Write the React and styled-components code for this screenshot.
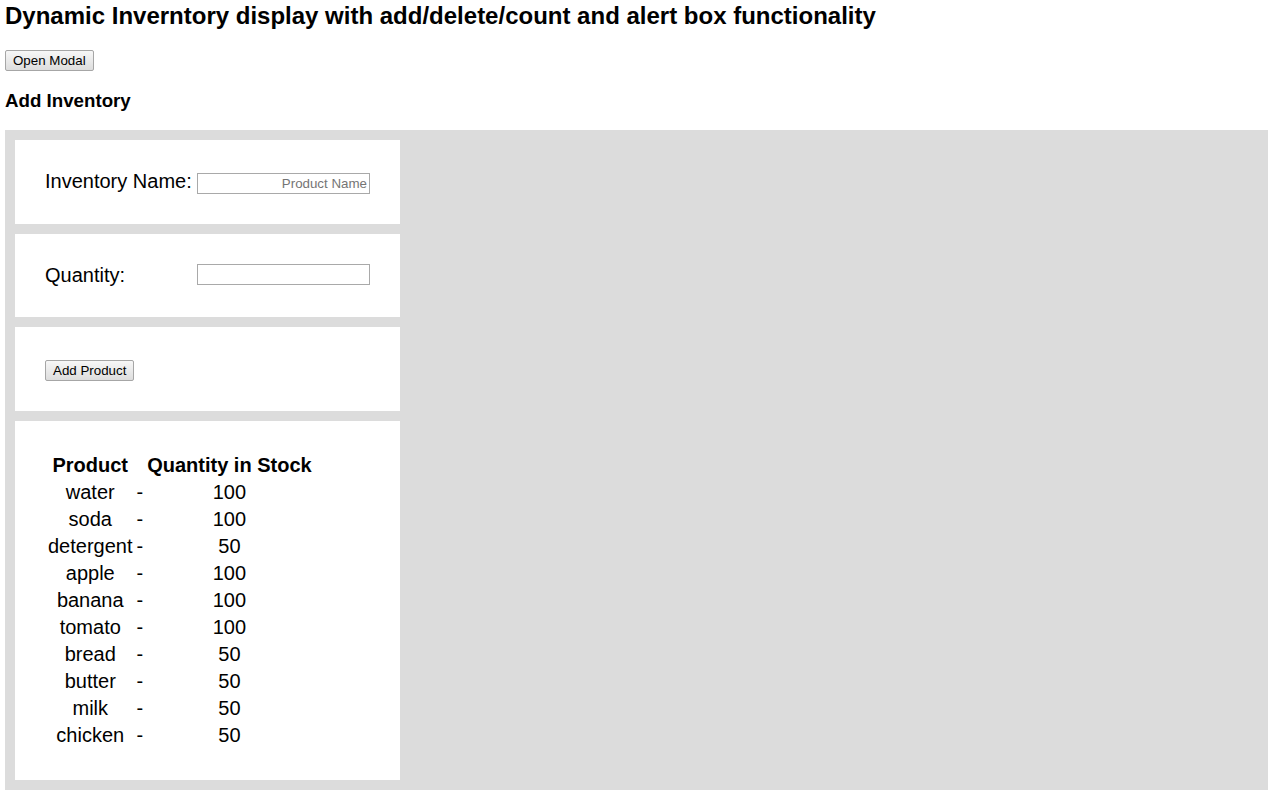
import styled, { createGlobalStyle } from "styled-components";

const GlobalStyle = createGlobalStyle`
	body {
		margin: 0;
		background: #ffffff;
		font-family: "Liberation Sans", Arial, sans-serif;
		color: #000000;
	}
`;

const inventory = [
	{ name: "water", qty: 100 },
	{ name: "soda", qty: 100 },
	{ name: "detergent", qty: 50 },
	{ name: "apple", qty: 100 },
	{ name: "banana", qty: 100 },
	{ name: "tomato", qty: 100 },
	{ name: "bread", qty: 50 },
	{ name: "butter", qty: 50 },
	{ name: "milk", qty: 50 },
	{ name: "chicken", qty: 50 },
];

const App = () => {
	return (
		<Page>
			<GlobalStyle />
			<Title>Dynamic Inverntory display with add/delete/count and alert box functionality</Title>
			<Btn>Open Modal</Btn>
			<SubTitle>Add Inventory</SubTitle>
			<Panel>
				<Card>
					<Label>Inventory Name:</Label>
					<Field placeholder="Product Name" />
				</Card>
				<Card>
					<Label>Quantity:</Label>
					<Field $valign="top" />
				</Card>
				<Card>
					<Btn>Add Product</Btn>
				</Card>
				<Card>
					<Table>
						<thead>
							<tr>
								<th>Product</th>
								<th></th>
								<th>Quantity in Stock</th>
							</tr>
						</thead>
						<tbody>
							{inventory.map((item) => (
								<tr key={item.name}>
									<td>{item.name}</td>
									<td>-</td>
									<td>{item.qty}</td>
								</tr>
							))}
						</tbody>
					</Table>
				</Card>
			</Panel>
		</Page>
	);
};

export default App;

const Page = styled.div`
	padding: 2px 5px 6px;
`;
const Title = styled.h2`
	margin: 0;
	font-size: 24px;
	line-height: 28px;
	font-weight: bold;
`;
const Btn = styled.button`
	display: inline-block;
	padding: 1px 7px;
	height: 21px;
	font-family: "Liberation Sans", Arial, sans-serif;
	font-size: 13.33px;
	color: #000;
	background: linear-gradient(#f7f7f7, #dddddd);
	border: 1px solid #a6a6a6;
	border-radius: 2px;
	${Title} + & {
		margin-top: 20px;
	}
`;
const SubTitle = styled.h3`
	margin: 19px 0 18px;
	font-size: 18.72px;
	line-height: 22px;
	font-weight: bold;
`;
const Panel = styled.div`
	display: flex;
	flex-direction: column;
	gap: 10px;
	padding: 10px;
	background: #dcdcdc;
`;
const Card = styled.div`
	width: 385px;
	box-sizing: border-box;
	padding: 30px;
	background: #ffffff;
	font-size: 20px;
	line-height: 23px;
`;
const Label = styled.span`
	display: inline-block;
	width: 152px;
`;
const Field = styled.input`
	width: 173px;
	height: 21px;
	box-sizing: border-box;
	padding: 1px 2px;
	border: 1px solid #a9a9a9;
	font-family: "Liberation Sans", Arial, sans-serif;
	font-size: 13.33px;
	text-align: right;
	vertical-align: ${(p) => p.$valign || "baseline"};
	outline: 0;
	&::placeholder {
		color: #757575;
	}
`;
const Table = styled.table`
	border-spacing: 2px;
	font-size: 20px;
	line-height: 23px;
	th,
	td {
		padding: 1px;
		text-align: center;
	}
	th {
		font-weight: bold;
	}
`;
